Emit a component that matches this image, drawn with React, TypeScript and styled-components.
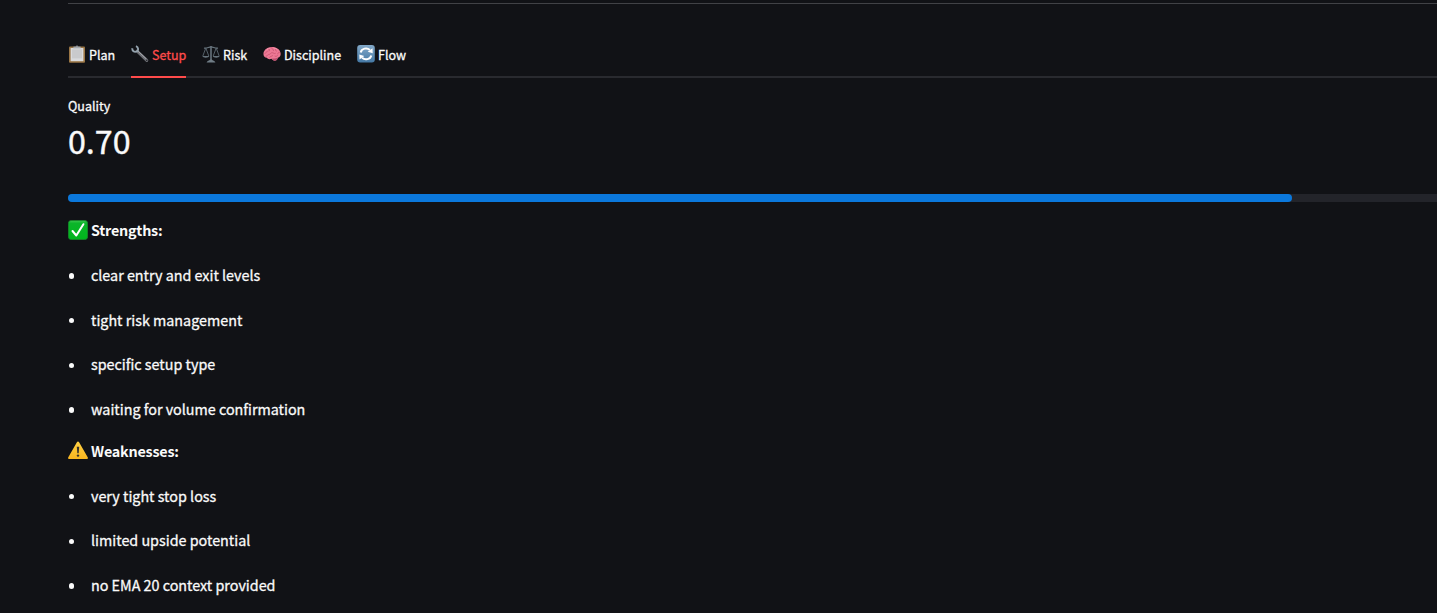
import React, { memo, ReactNode } from 'react'
import styled, { createGlobalStyle } from 'styled-components'

type TTab = {
	label: string
	icon: ReactNode
	width: number
}

const ClipboardIcon = () => (
	<svg width="18" height="20" viewBox="0 0 18 20">
		<rect x="1" y="2.4" width="16" height="16.4" rx="1" fill="#9a7645" />
		<rect x="2.6" y="4" width="12.8" height="13.2" fill="#d9dadc" />
		<rect x="4" y="5.4" width="10" height="9" fill="#c9cacc" />
		<path d="M5.4 4.2V2.4h2.2a1.5 1.5 0 0 1 2.8 0h2.2v1.8z" fill="#8d9299" />
		<path d="M5.4 3.9h7.2" stroke="#c4c8cc" strokeWidth=".7" />
	</svg>
)

const WrenchIcon = () => (
	<svg width="18" height="20" viewBox="0 0 18 20">
		<path
			d="M6 7 15.8 16.4"
			stroke="#6d6f75"
			strokeWidth="3"
			strokeLinecap="round"
		/>
		<path d="M6.6 6.8 15.6 15.2" stroke="#a7a9ae" strokeWidth="1" />
		<path
			d="M1.4 4.2c-.5 2.6 1.9 4.4 4.4 3.3C7.6 6.6 7.7 3.3 5 2.1"
			fill="none"
			stroke="#94a3ae"
			strokeWidth="1.9"
		/>
		<circle cx="15.7" cy="16.2" r=".8" fill="#24252a" />
	</svg>
)

const ScalesIcon = () => (
	<svg width="18" height="20" viewBox="0 0 18 20" fill="none">
		<path d="M9 2v14" stroke="#68747d" strokeWidth="1.6" />
		<path d="M2 4.1c3 .7 4.6-1.3 7-1.3s4 2 7 1.3" stroke="#68747d" strokeWidth="1.3" />
		<path
			d="M3.8 4 .8 12M3.8 4l3 8M14.2 4l-3 8M14.2 4l3 8"
			stroke="#5c6972"
			strokeWidth=".9"
		/>
		<path d="M.4 12h6.8c-.4 2.2-6.4 2.2-6.8 0zM10.8 12h6.8c-.4 2.2-6.4 2.2-6.8 0z" fill="#66737c" />
		<path d="M4.6 18.4c.4-1.6 2.8-1.8 3.6-2.9h1.6c.8 1.1 3.2 1.3 3.6 2.9z" fill="#707d86" />
	</svg>
)

const BrainIcon = () => (
	<svg width="18" height="20" viewBox="0 0 18 20" fill="none">
		<path
			d="M.5 10.4C.2 6.7 3.4 3.5 7.2 3.2c5-.8 10 1.8 10.4 6.1.3 2.5-.8 4.1-2.8 4.5-.2 1.8-1.4 2.9-3.2 2.9-1.3 0-2.2-.8-3.1-1.9-1.9 1-3.9.3-4.7-1-1.9-.2-3.2-1.4-3.3-3.4z"
			fill="#ed7894"
		/>
		<path
			d="M9.2 14.3c1.5.5 4 .3 5.4-.5-.2 1.8-1.4 2.9-3 2.9-1.2 0-1.9-.9-2.4-2.4z"
			fill="#b94e6d"
		/>
		<path
			d="M2 9.4c.7-1.3 2.1-1.2 2.8-2.4M5.4 4.7c1.2.2 1.5 1.4.8 2.3M8.6 3.7c.2 1.5 1.9 1.4 1.9 2.8M13.2 4.8c-1.2.8-.8 1.9.2 2.3M3 12.2c1.5-.1 1.6-1.7 3.1-1.8 1.3 0 1.6-1.7 3-1.7s1.9 1.3 3.2.7M16.4 8.3c-1 0-1.7.6-1.6 1.7M6.6 13.3c.6-1.2 2.3-.8 3.2-1.7M12 12.2c.9.4 1.9.1 2.5-.6"
			stroke="#c6526f"
			strokeWidth=".8"
			strokeLinecap="round"
		/>
		<path d="M3.2 6.4c1-1.4 2.2-2 3.6-2.2M10.7 4c1.5.1 2.6.5 3.6 1.4" stroke="#ffabc0" strokeWidth=".6" />
	</svg>
)

const RefreshIcon = () => (
	<svg width="18" height="20" viewBox="0 0 18 20" fill="none">
		<defs>
			<linearGradient id="refresh" x1="0" y1="0" x2="0" y2="1">
				<stop offset="0" stopColor="#83a9c9" />
				<stop offset="1" stopColor="#4478a5" />
			</linearGradient>
		</defs>
		<rect x=".2" y="1" width="17.6" height="17.6" rx="3" fill="url(#refresh)" />
		<path
			d="M3.7 8.4c1-4 6.2-5.2 9.2-2.4M14.3 11.4c-1 4-6.2 5.2-9.2 2.4"
			stroke="#fff"
			strokeWidth="2"
		/>
		<path d="m15.5 4.2.2 5.1-5-1.5zM2.5 15.6l-.2-5.1 5 1.5z" fill="#fff" />
	</svg>
)

const CheckIcon = () => (
	<svg width="20" height="20" viewBox="0 0 20 20" fill="none">
		<defs>
			<linearGradient id="check" x1="0" y1="0" x2="0" y2="1">
				<stop offset="0" stopColor="#3fc750" />
				<stop offset=".15" stopColor="#0bb52a" />
				<stop offset="1" stopColor="#00b51c" />
			</linearGradient>
		</defs>
		<rect x=".4" y=".4" width="19.2" height="19.2" rx="3" fill="url(#check)" stroke="#158c2a" strokeWidth=".8" />
		<path
			d="m4.5 11 3.8 4.5L15.4 4.2"
			stroke="#fff"
			strokeWidth="2"
			strokeLinecap="round"
			strokeLinejoin="round"
		/>
	</svg>
)

const WarningIcon = () => (
	<svg width="20" height="20" viewBox="0 0 20 20">
		<defs>
			<linearGradient id="warning" x1="0" y1="0" x2="0" y2="1">
				<stop offset="0" stopColor="#ffd044" />
				<stop offset="1" stopColor="#f9b61f" />
			</linearGradient>
		</defs>
		<path
			d="M8.9 1.2c.5-.9 1.7-.9 2.2 0l8.6 15c.5.9 0 1.7-1 1.7H1.3c-1 0-1.5-.8-1-1.7z"
			fill="url(#warning)"
		/>
		<path d="M8.8 5.7h2.4l-.5 6.5H9.3z" fill="#38332a" />
		<circle cx="10" cy="14.6" r="1.2" fill="#38332a" />
	</svg>
)

const tabs: TTab[] = [
	{ label: 'Plan', icon: <ClipboardIcon />, width: 47 },
	{ label: 'Setup', icon: <WrenchIcon />, width: 55 },
	{ label: 'Risk', icon: <ScalesIcon />, width: 45 },
	{ label: 'Discipline', icon: <BrainIcon />, width: 78 },
	{ label: 'Flow', icon: <RefreshIcon />, width: 50 },
]

const strengths = [
	'clear entry and exit levels',
	'tight risk management',
	'specific setup type',
	'waiting for volume confirmation',
]

const weaknesses = [
	'very tight stop loss',
	'limited upside potential',
	'no EMA 20 context provided',
]

const App = () => {
	const activeTab = 'Setup'

	return (
		<Page>
			<GlobalStyle />
			<Divider />
			<TabList role="tablist">
				{tabs.map(({ label, icon, width }) => (
					<Tab
						key={label}
						role="tab"
						aria-selected={label === activeTab}
						$active={label === activeTab}
						$width={width}>
						{icon}
						<span>{label}</span>
					</Tab>
				))}
			</TabList>
			<MetricLabel>Quality</MetricLabel>
			<MetricValue>0.70</MetricValue>
			<ProgressTrack>
				<ProgressFill />
			</ProgressTrack>
			<Heading $top={16}>
				<CheckIcon />
				<span>Strengths:</span>
			</Heading>
			<List $top={21}>
				{strengths.map((item) => (
					<Item key={item}>{item}</Item>
				))}
			</List>
			<Heading $top={17.9}>
				<WarningIcon />
				<span>Weaknesses:</span>
			</Heading>
			<List $top={20.7}>
				{weaknesses.map((item) => (
					<Item key={item}>{item}</Item>
				))}
			</List>
		</Page>
	)
}

export default memo(App)

const GlobalStyle = createGlobalStyle`
	* {
		box-sizing: border-box;
	}

	body {
		margin: 0;
		overflow: hidden;
		background: #111216;
	}
`

const Page = styled.main`
	height: 613px;
	padding: 3px 0 0 68px;
	overflow: hidden;
	background: #111216;
	color: #fafafa;
	font-family: 'Noto Sans CJK JP', 'Open Sans', sans-serif;
	font-weight: 400;
	font-size: 14.33px;
	-webkit-text-stroke: 0.3px;
`

const Divider = styled.div`
	height: 1px;
	background: #414246;
`

const TabList = styled.div`
	display: flex;
	gap: 16px;
	height: 42px;
	margin-top: 32px;
	border-bottom: 2px solid #292a2f;
`

const Tab = styled.button<{ $active: boolean; $width: number }>`
	display: flex;
	align-items: center;
	gap: 3px;
	width: ${({ $width }) => $width}px;
	height: 42px;
	padding: 0 0 4px;
	border: none;
	border-bottom: 2px solid ${({ $active }) => ($active ? '#ff4b4b' : 'transparent')};
	background: none;
	color: ${({ $active }) => ($active ? '#ff4b4b' : '#fafafa')};
	font: inherit;
	font-size: 12.54px;
	line-height: 20px;
	white-space: nowrap;
	cursor: pointer;
	-webkit-text-stroke: 0.3px;

	svg {
		flex: none;
	}

	span {
		padding-top: 2px;
	}
`

const MetricLabel = styled.div`
	margin-top: 18px;
	font-size: 12.54px;
	line-height: 20px;
`

const MetricValue = styled.div`
	margin-top: 2px;
	font-size: 32.2px;
	line-height: 44px;
	-webkit-text-stroke: 0.4px;
`

const ProgressTrack = styled.div`
	height: 8px;
	margin-top: 32px;
	border-radius: 4px 0 0 4px;
	background: #23242a;
`

const ProgressFill = styled.div`
	width: 1224px;
	height: 8px;
	border-radius: 4px;
	background: #0b78dc;
`

const Heading = styled.div<{ $top: number }>`
	display: flex;
	align-items: center;
	gap: 3px;
	height: 24px;
	margin-top: ${({ $top }) => $top}px;
	font-weight: 700;
	letter-spacing: -0.22px;
	line-height: 24px;
	-webkit-text-stroke: 0;
`

const List = styled.ul<{ $top: number }>`
	display: grid;
	grid-auto-rows: 24px;
	row-gap: 20.7px;
	margin: ${({ $top }) => $top}px 0 0;
	padding: 0;
	list-style: none;
`

const Item = styled.li`
	display: flex;
	align-items: center;
	line-height: 24px;
	white-space: nowrap;

	&::before {
		content: '';
		width: 5.4px;
		height: 5.4px;
		margin: 2px 16.8px 0 0.8px;
		border-radius: 50%;
		background: #fafafa;
	}
`
